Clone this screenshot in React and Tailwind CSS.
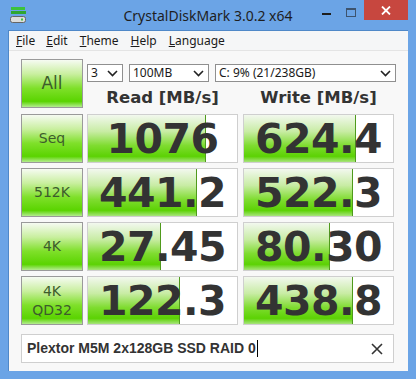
import React from "react";

const rows = [
  { label: ["Seq"], r: "1076", rw: 0.79, w: "624.4", ww: 0.75 },
  { label: ["512K"], r: "441.2", rw: 0.73, w: "522.3", ww: 0.73 },
  { label: ["4K"], r: "27.45", rw: 0.49, w: "80.30", ww: 0.58 },
  { label: ["4K", "QD32"], r: "122.3", rw: 0.62, w: "438.8", ww: 0.73 },
];

const btnBg =
  "bg-[linear-gradient(to_bottom,#f6fbf2_0%,#c9ef9f_30%,#7fe02a_60%,#5ad400_88%,#b4ec90_100%)]";
const barBg =
  "bg-[linear-gradient(to_bottom,#f2f8ee_0%,#c8eca4_35%,#7fdc30_65%,#5cd204_88%,#a8e47c_100%)]";

function LabelBtn({ lines, big }) {
  return (
    <div
      className={`w-[62px] h-[49px] shrink-0 border border-[#9a9a9a] ${btnBg} flex flex-col items-center justify-center text-[#3d5c2c] leading-[19px] ${
        big ? "text-[17px]" : "text-[14px]"
      }`}
      style={{ fontFamily: '"DejaVu Sans", Verdana, sans-serif' }}
    >
      {lines.map((l) => (
        <span key={l}>{l}</span>
      ))}
    </div>
  );
}

function ValueBox({ value, frac }) {
  return (
    <div className="relative w-[151px] h-[49px] border border-[#cfcfcf] bg-white overflow-hidden">
      <div
        className={`absolute left-0 top-0 bottom-0 ${barBg} border-r border-[#4f9a1c]`}
        style={{ width: `${frac * 100}%` }}
      />
      <div
        className="relative h-full flex items-center justify-center pt-[3px] text-[41px] font-bold text-[#333] tracking-[-0.5px]"
        style={{ fontFamily: '"DejaVu Sans", Verdana, sans-serif' }}
      >
        {value}
      </div>
    </div>
  );
}

function Select({ w, text }) {
  return (
    <div
      className="h-[18px] border border-[#8f8f8f] bg-white flex items-center justify-between pl-[3px] pr-[4px] text-[12px] text-[#1a1a1a]"
      style={{ width: w, fontFamily: '"Noto Sans", sans-serif' }}
    >
      <span className="leading-none">{text}</span>
      <svg width="11" height="7" viewBox="0 0 11 7">
        <path d="M1 1 L5.5 5.5 L10 1" fill="none" stroke="#222" strokeWidth="1.6" />
      </svg>
    </div>
  );
}

export default function App() {
  return (
    <div
      className="w-[416px] h-[379px] bg-[#6ba4e6] flex flex-col overflow-hidden"
      style={{ fontFamily: '"Noto Sans", sans-serif' }}
    >
      {/* title bar */}
      <div className="relative h-[30px] shrink-0 flex items-center">
        <svg className="ml-[10px]" width="17" height="18" viewBox="0 0 17 18">
          <rect x="1" y="1" width="14" height="3" fill="#3cc23c" />
          <rect x="1" y="5" width="15" height="3" fill="#2fa62f" />
          <rect x="0.5" y="10.5" width="15" height="6" rx="2" fill="#dcdcdc" stroke="#666" />
          <rect x="11" y="12.5" width="2" height="2" fill="#3cc23c" />
        </svg>
        <div className="absolute left-0 right-0 top-[5px] text-center text-[14px] text-[#1e1e1e] pointer-events-none">
          CrystalDiskMark 3.0.2 x64
        </div>
        <div className="absolute left-[322px] top-[13px] w-[9px] h-[2px] bg-[#1e1e1e]" />
        <div className="absolute left-[346px] top-[8px] w-[10px] h-[9px] border border-[#1e1e1e] border-t-2 opacity-60" />
        <div className="absolute left-[364px] top-0 w-[44px] h-[20px] bg-[#c7473f] flex items-center justify-center">
          <svg width="10" height="9" viewBox="0 0 10 9">
            <path d="M1 0.5 L9 8.5 M9 0.5 L1 8.5" stroke="#fff" strokeWidth="1.8" />
          </svg>
        </div>
      </div>

      {/* client area */}
      <div className="mx-[8px] mb-[8px] flex-1 flex flex-col border-l border-t border-[#4f88c8]">
        <div className="h-[20px] shrink-0 bg-[#f5f6f7] border-b border-[#e4e4e4] flex items-center text-[12px] text-[#1a1a1a] leading-none">
          <span className="ml-[7px]"><u>F</u>ile</span>
          <span className="ml-[11px]"><u>E</u>dit</span>
          <span className="ml-[12px]"><u>T</u>heme</span>
          <span className="ml-[12px]"><u>H</u>elp</span>
          <span className="ml-[12px]"><u>L</u>anguage</span>
        </div>
        <div className="flex-1 bg-[#f8f8f8] pl-[12px] pt-[8px] flex flex-col">
          {/* top row */}
          <div className="flex gap-[4px]">
            <LabelBtn lines={["All"]} big />
            <div className="flex flex-col">
              <div className="flex mt-[5px] gap-[6px]">
                <Select w={36} text="3" />
                <Select w={80} text="100MB" />
                <Select w={181} text="C: 9% (21/238GB)" />
              </div>
              <div
                className="flex gap-[5px] mt-[5px] text-[16.5px] font-bold text-[#333] leading-[22px]"
                style={{ fontFamily: '"DejaVu Sans", Verdana, sans-serif' }}
              >
                <div className="w-[151px] text-center">Read [MB/s]</div>
                <div className="w-[151px] text-center">Write [MB/s]</div>
              </div>
            </div>
          </div>
          {/* value rows */}
          <div className="flex flex-col gap-[5px] mt-[5px]">
            {rows.map((row) => (
              <div key={row.r} className="flex gap-[4px]">
                <LabelBtn lines={row.label} />
                <div className="flex gap-[5px]">
                  <ValueBox value={row.r} frac={row.rw} />
                  <ValueBox value={row.w} frac={row.ww} />
                </div>
              </div>
            ))}
          </div>
          {/* comment box */}
          <div className="mt-[9px] w-[373px] h-[29px] border border-[#cfcfcf] bg-white flex items-center justify-between pl-[5px] pr-[10px]">
            <div
              className="flex items-center text-[14px] font-bold text-[#333]"
              style={{ fontFamily: '"Liberation Sans", Arial, sans-serif' }}
            >
              <span>Plextor M5M 2x128GB SSD RAID 0</span>
              <span className="w-[1px] h-[17px] bg-black ml-[1px]" />
            </div>
            <svg width="12" height="12" viewBox="0 0 12 12">
              <path d="M1 1 L11 11 M11 1 L1 11" stroke="#333" strokeWidth="1.6" />
            </svg>
          </div>
        </div>
      </div>
    </div>
  );
}
